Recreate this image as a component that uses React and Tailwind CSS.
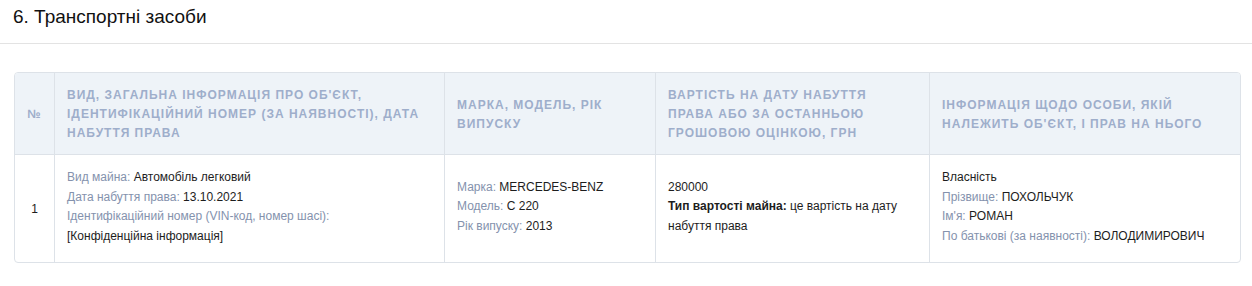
import React from "react";

const F = { fontFamily: '"Liberation Sans", Arial, sans-serif' };

function L({ label, children }) {
  return (
    <div>
      <span className="text-[#8492ad]">{label}</span>{" "}
      <span className="text-[#1d1d1d]">{children}</span>
    </div>
  );
}

export default function App() {
  const th =
    "flex items-center pt-[13px] pb-[11px] pl-3 pr-6 text-[12px] leading-[19px] font-bold uppercase tracking-[1px] text-[#9eaecb]";
  const td = "flex items-center pt-[13px] pb-[16px] pl-3 pr-4 text-[12px] leading-[19.5px] text-[#1d1d1d]";
  return (
    <div className="w-[1252px] h-[286px] bg-white" style={F}>
      <div className="h-[44px] border-b border-[#e3e3e3] pl-[13px] pt-[5px] text-[19px] leading-[24px] text-[#111]">
        6. Транспортні засоби
      </div>
      <div className="pt-[28px] px-[14px]">
        <div className="w-[1227px] border border-[#dde2e8] rounded-[4px] overflow-hidden grid grid-cols-[39px_390px_211px_274px_1fr]">
          <div className={th + " justify-center !px-0 bg-[#eef3f8] border-b border-[#dde2e8]"}>№</div>
          <div className={th + " bg-[#eef3f8] border-b border-l border-[#dde2e8]"}>
            Вид, загальна інформація про об'єкт, ідентифікаційний номер (за наявності), дата набуття права
          </div>
          <div className={th + " bg-[#eef3f8] border-b border-l border-[#dde2e8]"}>Марка, модель, рік випуску</div>
          <div className={th + " bg-[#eef3f8] border-b border-l border-[#dde2e8]"}>
            Вартість на дату набуття права або за останньою грошовою оцінкою, грн
          </div>
          <div className={th + " bg-[#eef3f8] border-b border-l border-[#dde2e8]"}>
            Інформація щодо особи, якій належить об'єкт, і прав на нього
          </div>

          <div className={td + " justify-center !px-0 !pt-[16px] !pb-[13px]"}>1</div>
          <div className={td + " border-l border-[#dde2e8]"}>
            <div>
              <L label="Вид майна:">Автомобіль легковий</L>
              <L label="Дата набуття права:">13.10.2021</L>
              <div className="text-[#8492ad]">Ідентифікаційний номер (VIN-код, номер шасі):</div>
              <div>[Конфіденційна інформація]</div>
            </div>
          </div>
          <div className={td + " border-l border-[#dde2e8]"}>
            <div>
              <L label="Марка:">MERCEDES-BENZ</L>
              <L label="Модель:">C 220</L>
              <L label="Рік випуску:">2013</L>
            </div>
          </div>
          <div className={td + " border-l border-[#dde2e8]"}>
            <div>
              <div>280000</div>
              <p>
                <b className="font-bold">Тип вартості майна:</b> це вартість на дату набуття права
              </p>
            </div>
          </div>
          <div className={td + " border-l border-[#dde2e8]"}>
            <div>
              <div>Власність</div>
              <L label="Прізвище:">ПОХОЛЬЧУК</L>
              <L label="Ім'я:">РОМАН</L>
              <L label="По батькові (за наявності):">ВОЛОДИМИРОВИЧ</L>
            </div>
          </div>
        </div>
      </div>
    </div>
  );
}
